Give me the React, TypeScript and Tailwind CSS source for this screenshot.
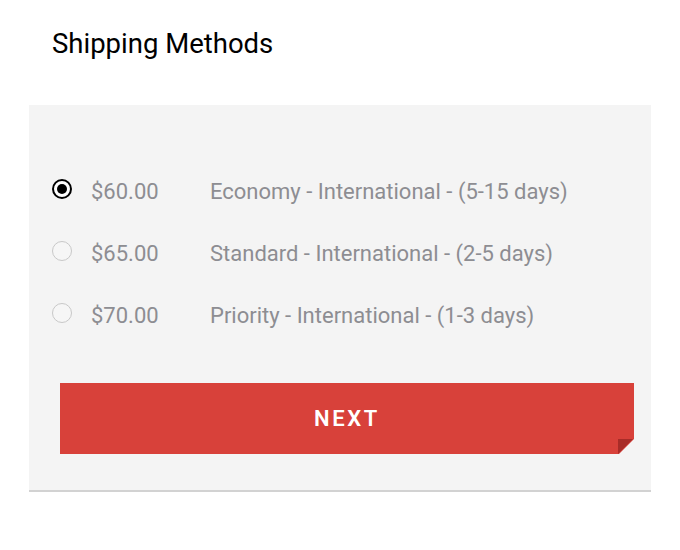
const OPTIONS = [
  { id: 'economy', price: '$60.00', label: 'Economy - International - (5-15 days)' },
  { id: 'standard', price: '$65.00', label: 'Standard - International - (2-5 days)' },
  { id: 'priority', price: '$70.00', label: 'Priority - International - (1-3 days)' },
];

export default function App() {
  const selected = 'economy';

  return (
    <div className="w-[680px] h-[550px] bg-white font-['Roboto',sans-serif]">
      <div className="pt-[25px] pl-[52px]">
        <h1 className="text-[27.5px] leading-[38px] text-black">Shipping Methods</h1>
      </div>

      <div className="mt-[42px] ml-[29px] w-[622px] h-[387px] bg-[#f4f4f4] border-b-2 border-[#d2d2d2] pt-[70px]">
        <div className="flex flex-col gap-[30px]">
          {OPTIONS.map((o) => (
            <label key={o.id} className="flex items-center h-[32px] pl-[23px]">
              {o.id === selected ? (
                <span className="mb-[4px] w-[20px] h-[20px] rounded-full border-[2.5px] border-black flex items-center justify-center bg-white">
                  <span className="w-[10px] h-[10px] rounded-full bg-black" />
                </span>
              ) : (
                <span className="mb-[4px] w-[20px] h-[20px] rounded-full border-[1.5px] border-[#c8c8c8] bg-[#f6f6f6]" />
              )}
              <span className="ml-[19px] w-[119px] text-[22px] text-[#8d8d92]">{o.price}</span>
              <span className="text-[22px] text-[#8d8d92]">{o.label}</span>
            </label>
          ))}
        </div>

        <div className="relative mt-[52px] ml-[31px] w-[574px] h-[71px]">
          <button className="w-full h-full bg-[#d8413a] text-white text-[22px] font-semibold tracking-[0.12em] [clip-path:polygon(0_0,100%_0,100%_calc(100%-15px),calc(100%-15px)_100%,0_100%)]">
            NEXT
          </button>
          <span className="absolute right-[1px] bottom-0 w-[15px] h-[15px] bg-[#a82c28] [clip-path:polygon(0_0,100%_0,0_100%)]" />
        </div>
      </div>
    </div>
  );
}
